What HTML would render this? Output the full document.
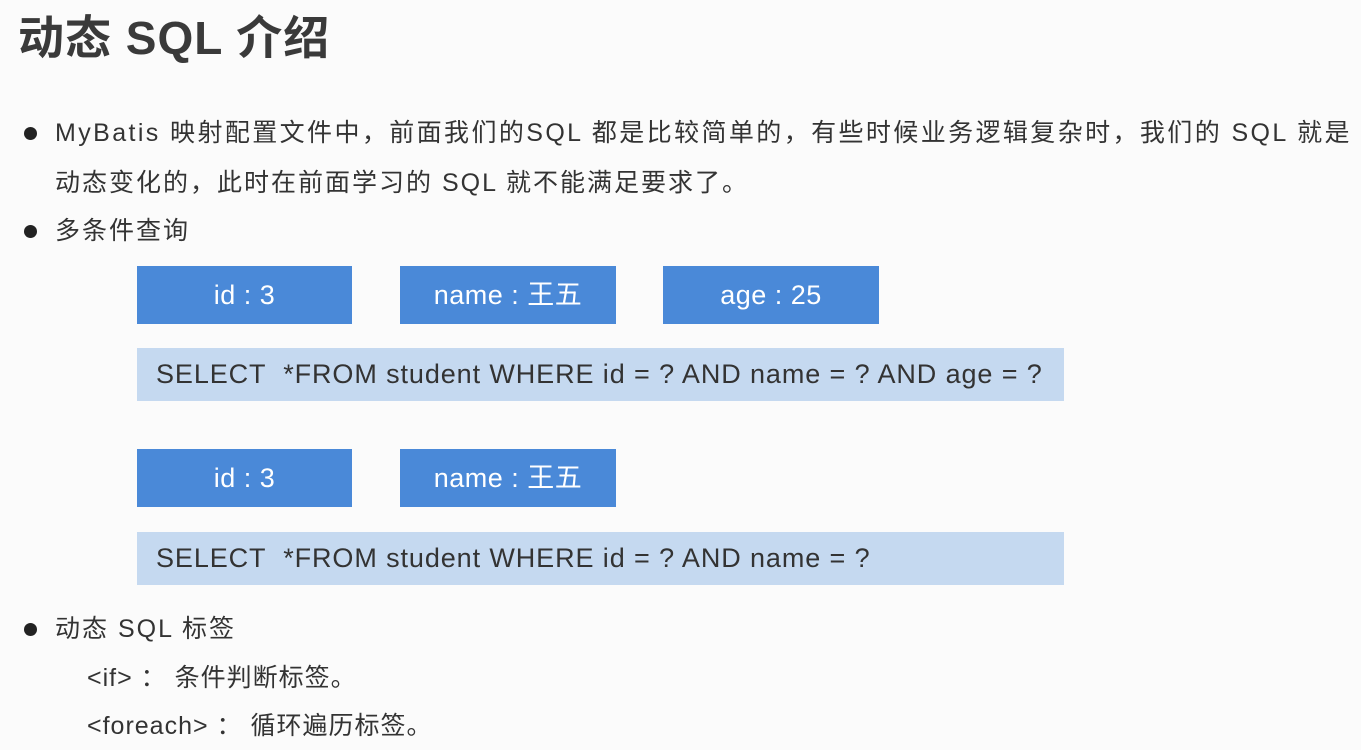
<!DOCTYPE html>
<html><head><meta charset="utf-8"><style>
body{margin:0;width:1361px;height:750px;background:#fbfbfb;font-family:"Liberation Sans","Noto Sans CJK SC",sans-serif;color:#333;position:relative;overflow:hidden}
.a{position:absolute;white-space:nowrap}
h1{position:absolute;left:18px;top:2px;margin:0;font-size:46px;font-weight:bold;color:#3a3a3a;letter-spacing:1px}
.t{font-size:25px;line-height:30px;letter-spacing:2px}
.dot{position:absolute;width:13px;height:13px;border-radius:50%;background:#222}
.b{position:absolute;background:#4a89d8;color:#fff;font-size:27px;text-align:center;line-height:58px;height:58px;letter-spacing:0.5px}
.s{position:absolute;background:#c5d9f0;color:#333;font-size:27px;line-height:53px;height:53px;left:137px;width:927px;padding-left:19px;box-sizing:border-box;letter-spacing:0.9px}
</style></head><body>
<h1>动态 SQL 介绍</h1>
<div class="dot" style="left:24px;top:127px"></div>
<div class="a t" style="left:55px;top:118px;letter-spacing:2.4px">MyBatis 映射配置文件中，前面我们的SQL 都是比较简单的，有些时候业务逻辑复杂时，我们的 SQL 就是</div>
<div class="a t" style="left:55px;top:168px">动态变化的，此时在前面学习的 SQL 就不能满足要求了。</div>
<div class="dot" style="left:24px;top:225px"></div>
<div class="a t" style="left:55px;top:216px">多条件查询</div>
<div class="b" style="left:137px;top:266px;width:215px">id : 3</div>
<div class="b" style="left:400px;top:266px;width:216px">name : 王五</div>
<div class="b" style="left:663px;top:266px;width:216px">age : 25</div>
<div class="s" style="top:348px">SELECT&nbsp; *FROM student WHERE id = ? AND name = ? AND age = ?</div>
<div class="b" style="left:137px;top:449px;width:215px">id : 3</div>
<div class="b" style="left:400px;top:449px;width:216px">name : 王五</div>
<div class="s" style="top:532px">SELECT&nbsp; *FROM student WHERE id = ? AND name = ?</div>
<div class="dot" style="left:24px;top:623px"></div>
<div class="a t" style="left:55px;top:614px">动态 SQL 标签</div>
<div class="a t" style="left:87px;top:663px;letter-spacing:1px">&lt;if&gt; ： 条件判断标签。</div>
<div class="a t" style="left:87px;top:711px;letter-spacing:1px">&lt;foreach&gt; ： 循环遍历标签。</div>
</body></html>
